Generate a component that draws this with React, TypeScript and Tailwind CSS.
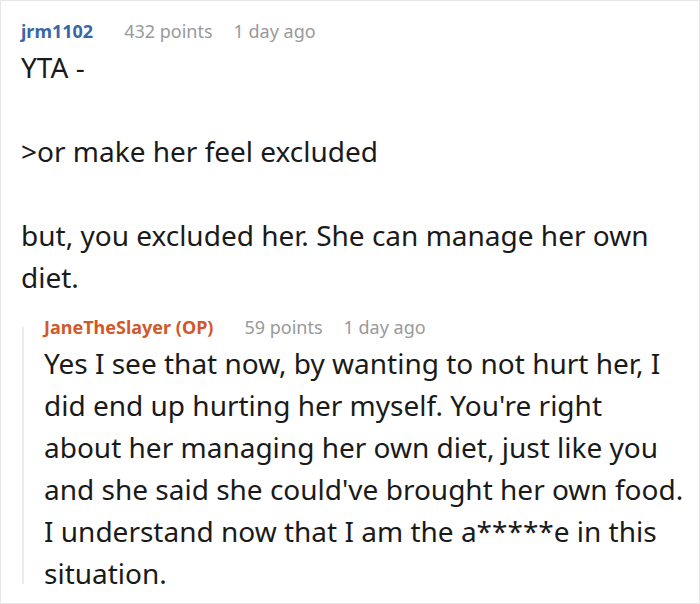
import React from "react";

export default function App() {
  const font = { fontFamily: '"Noto Sans", sans-serif' };
  return (
    <div
      className="w-[700px] h-[604px] bg-white border border-[#e6e6e6] pl-[20px] pr-[14px] pt-[17px] overflow-hidden text-[#1a1a1a]"
      style={font}
    >
      <div className="flex items-center text-[18px] leading-[26px]">
        <span className="font-bold text-[#3a66a8]">jrm1102</span>
        <span className="ml-[31px] text-[#999999]">432 points</span>
        <span className="ml-[21px] text-[#999999]">1 day ago</span>
      </div>
      <div className="mt-[2px] text-[28px] leading-[42px]">
        <p>YTA -</p>
        <p className="mt-[42px]">&gt;or make her feel excluded</p>
        <p className="mt-[42px]">but, you excluded her. She can manage her own diet.</p>
      </div>
      <div className="mt-[16px] ml-[1px] flex">
        <div className="w-[2px] bg-[#ececec] mt-[13px] mb-[10px] shrink-0" />
        <div className="pl-[20px]">
          <div className="flex items-center text-[18px] leading-[26px]">
            <span className="font-bold text-[#d2582a]">JaneTheSlayer (OP)</span>
            <span className="ml-[31px] text-[#999999]">59 points</span>
            <span className="ml-[21px] text-[#999999]">1 day ago</span>
          </div>
          <p className="mt-[2px] text-[28px] leading-[42px]">
            Yes I see that now, by wanting to not hurt her, I did end up hurting her myself. You're right about her managing her own diet, just like you and she said she could've brought her own food. I understand now that I am the a*****e in this situation.
          </p>
        </div>
      </div>
    </div>
  );
}
